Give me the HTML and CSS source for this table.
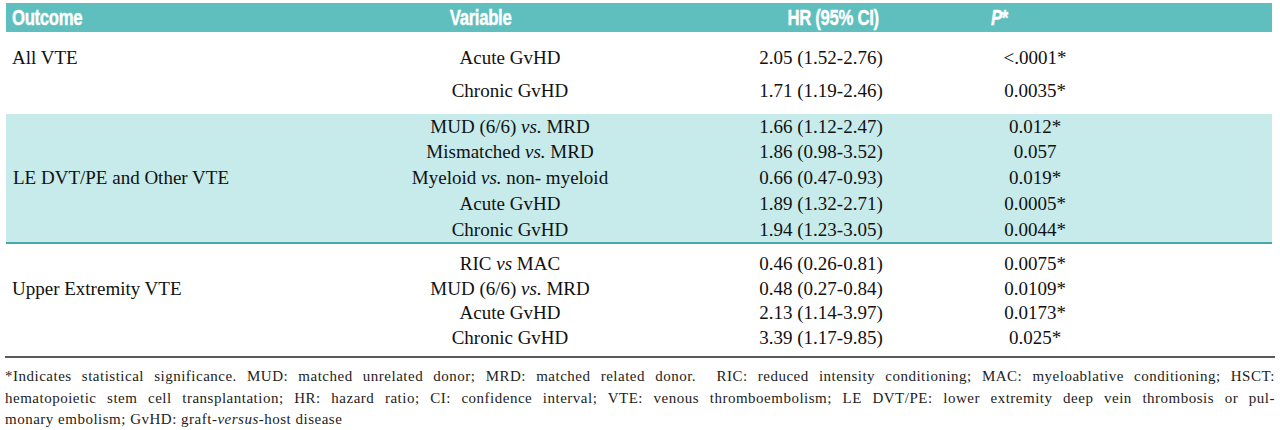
FILE: index.html
```html
<!DOCTYPE html>
<html>
<head>
<meta charset="utf-8">
<link rel="stylesheet" href="styles.css">
</head>
<body>
<div class="page">
  <div class="table">
    <div class="head grid">
      <div class="h h-outcome"><span>Outcome</span></div>
      <div class="h h-var"><span>Variable</span></div>
      <div class="h h-hr"><span>HR (95% CI)</span></div>
      <div class="h h-p"><span><i>P</i>*</span></div>
    </div>

    <div class="section s1 grid">
      <div class="outcome r1">All VTE</div>
      <div class="var r1">Acute GvHD</div><div class="hr r1">2.05 (1.52-2.76)</div><div class="p r1">&lt;.0001*</div>
      <div class="var r2">Chronic GvHD</div><div class="hr r2">1.71 (1.19-2.46)</div><div class="p r2">0.0035*</div>
    </div>

    <div class="section s2 grid">
      <div class="outcome span5">LE DVT/PE and Other VTE</div>
      <div class="var r1">MUD (6/6) <i>vs.</i> MRD</div><div class="hr r1">1.66 (1.12-2.47)</div><div class="p r1">0.012*</div>
      <div class="var r2">Mismatched <i>vs.</i> MRD</div><div class="hr r2">1.86 (0.98-3.52)</div><div class="p r2">0.057</div>
      <div class="var r3">Myeloid <i>vs.</i> non- myeloid</div><div class="hr r3">0.66 (0.47-0.93)</div><div class="p r3">0.019*</div>
      <div class="var r4">Acute GvHD</div><div class="hr r4">1.89 (1.32-2.71)</div><div class="p r4">0.0005*</div>
      <div class="var r5">Chronic GvHD</div><div class="hr r5">1.94 (1.23-3.05)</div><div class="p r5">0.0044*</div>
    </div>

    <div class="section s3 grid">
      <div class="outcome span3">Upper Extremity VTE</div>
      <div class="var r1">RIC <i>vs</i> MAC</div><div class="hr r1">0.46 (0.26-0.81)</div><div class="p r1">0.0075*</div>
      <div class="var r2">MUD (6/6) <i>vs.</i> MRD</div><div class="hr r2">0.48 (0.27-0.84)</div><div class="p r2">0.0109*</div>
      <div class="var r3">Acute GvHD</div><div class="hr r3">2.13 (1.14-3.97)</div><div class="p r3">0.0173*</div>
      <div class="var r4">Chronic GvHD</div><div class="hr r4">3.39 (1.17-9.85)</div><div class="p r4">0.025*</div>
    </div>
  </div>

  <div class="foot">
    <div class="fl just">*Indicates statistical significance. MUD: matched unrelated donor; MRD: matched related donor.&nbsp; RIC: reduced intensity conditioning; MAC: myeloablative conditioning; HSCT:</div>
    <div class="fl just">hematopoietic stem cell transplantation; HR: hazard ratio; CI: confidence interval; VTE: venous thromboembolism; LE DVT/PE: lower extremity deep vein thrombosis or pul-</div>
    <div class="fl">monary embolism; GvHD: graft-<i>versus</i>-host disease</div>
  </div>
</div>
</body>
</html>
```

FILE: styles.css
```css
html, body {
  margin: 0;
  padding: 0;
  background: #ffffff;
}

.page {
  padding: 3px 5px 0 5px;
  width: 1270px;
}

.table {
  border-bottom: 2px solid #5a5a5a;
}

.grid {
  display: grid;
  grid-template-columns: 335px 340px 282px 146px 1fr;
}

.head {
  background: #5ebfbe;
  height: 29px;
  margin: 0 3px 0 1px;
  align-items: center;
}

.h {
  color: #ffffff;
  font-family: "Liberation Sans", Arial, sans-serif;
  font-weight: bold;
  font-size: 22px;
  line-height: 29px;
  letter-spacing: -0.4px;
}

.h span {
  display: inline-block;
  transform: scaleX(0.76);
  -webkit-text-stroke: 0.4px #ffffff;
}

.h-outcome { grid-column: 1; padding-left: 6px; }
.h-outcome span { transform-origin: left center; }
.h-var { grid-column: 2; text-align: center; padding-right: 60px; }
.h-hr { grid-column: 3; text-align: center; padding-left: 22px; }
.h-p { grid-column: 4; text-align: left; padding-left: 28px; }
.h-p span { transform-origin: left center; }

.section {
  font-family: "Liberation Serif", "Times New Roman", serif;
  font-size: 19px;
  color: #111111;
  align-items: center;
}

.outcome { grid-column: 1; padding-left: 7px; grid-row: 1; }
.var { grid-column: 2; text-align: center; white-space: nowrap; }
.hr { grid-column: 3; text-align: center; white-space: nowrap; }
.p { grid-column: 4; text-align: center; white-space: nowrap; }

.r1 { grid-row: 1; }
.r2 { grid-row: 2; }
.r3 { grid-row: 3; }
.r4 { grid-row: 4; }
.r5 { grid-row: 5; }
.span5 { grid-row: 1 / 6; }
.span3 { grid-row: 1 / 4; }

.s1 {
  grid-template-rows: 33px 33px;
  padding: 9px 0 7px 0;
}

.s2 {
  background: #c6ebea;
  margin: 0 3px 0 1px;
  grid-template-columns: 334px 340px 282px 146px 1fr;
  grid-template-rows: 25px 26px 26px 26px 25px;
  padding: 0 0 0 0;
  border-bottom: 2px solid #4aa9a8;
  height: 130px;
  box-sizing: border-box;
}

.s3 {
  grid-template-rows: repeat(4, 24.5px);
  padding: 8px 0 6px 0;
}

.foot {
  font-family: "Liberation Serif", "Times New Roman", serif;
  font-size: 15px;
  color: #222222;
  padding-top: 8px;
  letter-spacing: 0.5px;
}

.fl {
  line-height: 21.5px;
  white-space: nowrap;
}

.fl.just {
  white-space: normal;
  text-align: justify;
  text-align-last: justify;
}
```
